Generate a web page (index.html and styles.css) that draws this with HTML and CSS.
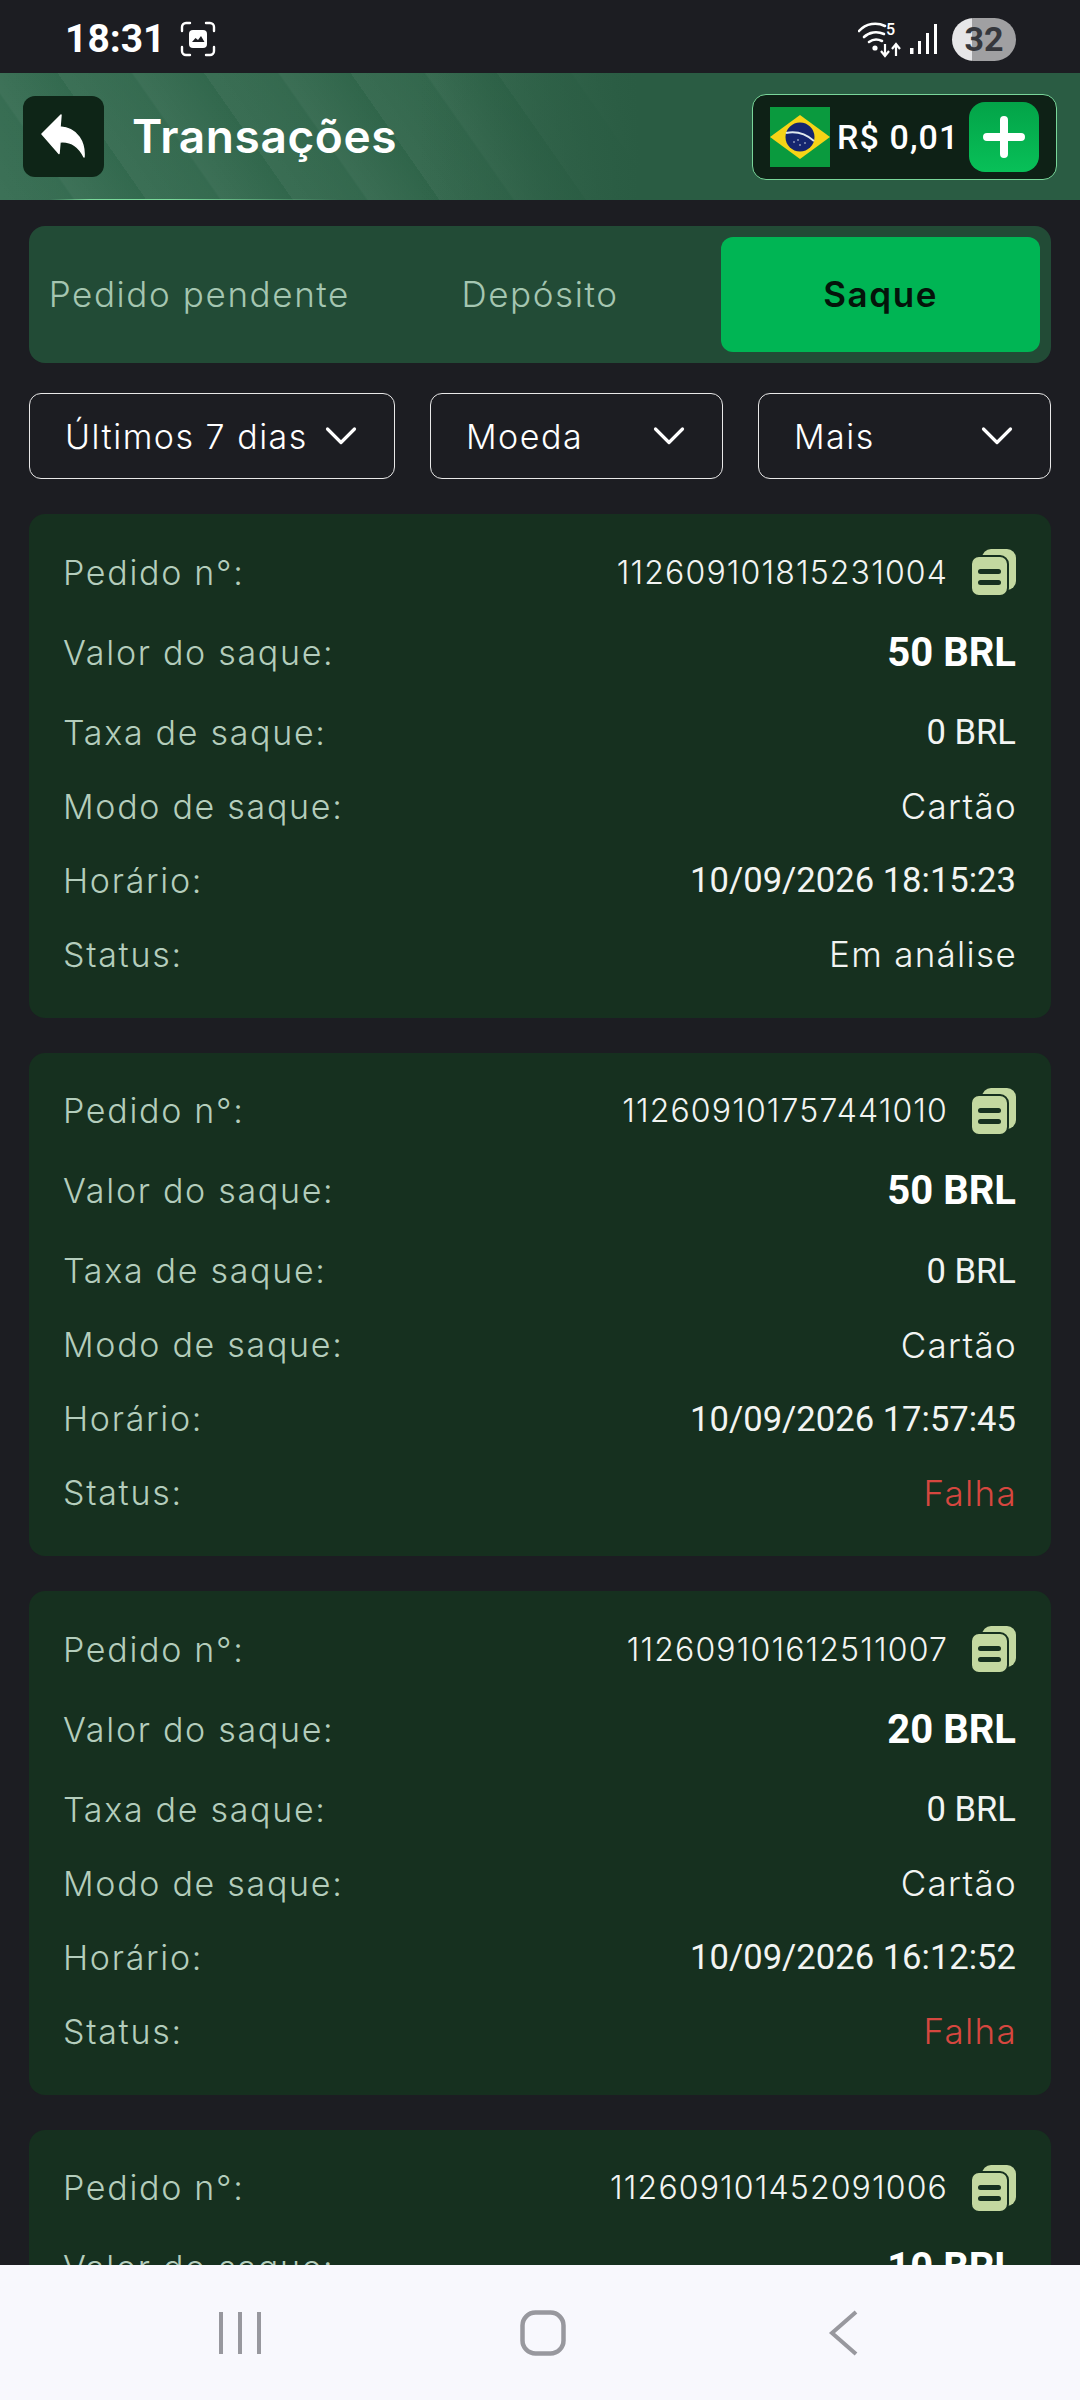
FILE: index.html
```html
<!DOCTYPE html>
<html lang="pt-BR">
<head>
    <meta charset="UTF-8">
    <title>Transações</title>
    <link rel="stylesheet" href="styles.css">
</head>
<body>
<svg class="defs">
    <symbol id="chevron" viewBox="0 0 32 20">
        <path d="M2.5 3 16 16.5 29.500 3" fill="none" stroke="#fff" stroke-width="3.200" stroke-linecap="round" stroke-linejoin="round"/>
    </symbol>
    <symbol id="copy" viewBox="0 0 44 46">
        <rect x="10" y="0" width="34" height="41" rx="9" fill="#c3d8a0"/>
        <rect x="-1" y="7" width="37" height="40" rx="8" fill="#c3d8a0" stroke="#16301f" stroke-width="2"/>
        <rect x="6" y="20" width="23" height="5" rx="2.500" fill="#16301f"/>
        <rect x="6" y="31" width="23" height="5" rx="2.500" fill="#16301f"/>
    </symbol>
</svg>

<div class="page">
    <!--status bar-->
    <div class="status_bar">
        <div class="status_left">
            <span class="clock">18:31</span>
            <svg class="shot_icon" width="36" height="36" viewBox="0 0 36 36">
                <path d="M2 10V6a4 4 0 0 1 4-4h4M26 2h4a4 4 0 0 1 4 4v4M34 26v4a4 4 0 0 1-4 4h-4M10 34H6a4 4 0 0 1-4-4v-4" fill="none" stroke="#fff" stroke-width="2.400" stroke-linecap="round"/>
                <rect x="9" y="9" width="18" height="18" rx="4" fill="#fff"/>
                <path d="M12 21l3.500-4 2.500 2 3-4 3.500 6z" fill="#1c1d22"/>
            </svg>
        </div>
        <div class="status_right">
            <svg width="44" height="40" viewBox="0 0 44 40">
                <g fill="none" stroke="#fff" stroke-width="2.600" stroke-linecap="round">
                    <path d="M1 12C8 4 19 3 27 7"/>
                    <path d="M6 18c5-5 13-6 20-3"/>
                    <path d="M11 23c4-3 9-3 13-1"/>
                </g>
                <circle cx="17" cy="29" r="2.600" fill="#fff"/>
                <path d="M27 25v11M23 32l4 5 4-5M38 37V26M34 30l4-5 4 5" fill="none" stroke="#fff" stroke-width="2.200"/>
                <text x="28" y="16" class="wifi_num">5</text>
            </svg>
            <svg class="signal" width="28" height="32" viewBox="0 0 28 32">
                <rect x="0" y="25" width="3.500" height="6" fill="#fff"/>
                <rect x="8" y="18" width="3" height="13" fill="#fff"/>
                <rect x="16" y="10" width="3" height="21" fill="#fff"/>
                <rect x="24" y="1" width="3" height="30" fill="#fff"/>
            </svg>
            <span class="battery">32</span>
        </div>
    </div>

    <!--header-->
    <div class="top_bar">
        <a class="back_btn" href="#">
            <svg width="46" height="46" viewBox="0 0 46 46">
                <path d="M20 1 1 20l17 19.500 1-11.500c10-1 18 3 24 15 1-14-6-29-24-30z" fill="#fff" stroke="#fff" stroke-width="1.500" stroke-linejoin="round"/>
            </svg>
        </a>
        <h1 class="page_title">Transações</h1>
        <div class="balance">
            <svg class="flag" width="60" height="60" viewBox="0 0 60 60">
                <rect width="60" height="60" fill="#0a9a3e"/>
                <path d="M30 8 60 30 30 52 0 30z" fill="#f7d417"/>
                <circle cx="30" cy="30" r="14.500" fill="#15256f"/>
                <path d="M16 26c10-2 20 1 28 8" fill="none" stroke="#dfe8ee" stroke-width="2"/>
                <g fill="#dfe8ee">
                    <circle cx="24" cy="35" r="0.800"/>
                    <circle cx="30" cy="38" r="0.800"/>
                    <circle cx="35" cy="36" r="0.800"/>
                    <circle cx="28" cy="33" r="0.800"/>
                </g>
            </svg>
            <span class="balance_value">R$ 0,01</span>
            <a class="plus_btn" href="#">
                <svg width="42" height="42" viewBox="0 0 42 42">
                    <path d="M21 4v34M4 21h34" stroke="#fff" stroke-width="8" stroke-linecap="round"/>
                </svg>
            </a>
        </div>
    </div>

    <div class="content">
        <!--tabs-->
        <div class="tabs">
            <div class="tab">Pedido pendente</div>
            <div class="tab">Depósito</div>
            <div class="tab tab_active">Saque</div>
        </div>

        <!--filters-->
        <div class="filters">
            <div class="filter filter_date"><span>Últimos 7 dias</span><svg class="chevron"><use href="#chevron"/></svg></div>
            <div class="filter filter_coin"><span>Moeda</span><svg class="chevron"><use href="#chevron"/></svg></div>
            <div class="filter filter_more"><span>Mais</span><svg class="chevron"><use href="#chevron"/></svg></div>
        </div>

        <!--orders-->
        <div class="order">
            <div class="row row_id"><span class="label">Pedido n°:</span><span class="value order_id">112609101815231004<svg class="copy"><use href="#copy"/></svg></span></div>
            <div class="row row_amount"><span class="label">Valor do saque:</span><span class="num amount">50 BRL</span></div>
            <div class="row"><span class="label">Taxa de saque:</span><span class="num">0 BRL</span></div>
            <div class="row"><span class="label">Modo de saque:</span><span class="value">Cartão</span></div>
            <div class="row"><span class="label">Horário:</span><span class="num">10/09/2026 18:15:23</span></div>
            <div class="row"><span class="label">Status:</span><span class="value">Em análise</span></div>
        </div>

        <div class="order">
            <div class="row row_id"><span class="label">Pedido n°:</span><span class="value order_id">112609101757441010<svg class="copy"><use href="#copy"/></svg></span></div>
            <div class="row row_amount"><span class="label">Valor do saque:</span><span class="num amount">50 BRL</span></div>
            <div class="row"><span class="label">Taxa de saque:</span><span class="num">0 BRL</span></div>
            <div class="row"><span class="label">Modo de saque:</span><span class="value">Cartão</span></div>
            <div class="row"><span class="label">Horário:</span><span class="num">10/09/2026 17:57:45</span></div>
            <div class="row"><span class="label">Status:</span><span class="value failed">Falha</span></div>
        </div>

        <div class="order">
            <div class="row row_id"><span class="label">Pedido n°:</span><span class="value order_id">112609101612511007<svg class="copy"><use href="#copy"/></svg></span></div>
            <div class="row row_amount"><span class="label">Valor do saque:</span><span class="num amount">20 BRL</span></div>
            <div class="row"><span class="label">Taxa de saque:</span><span class="num">0 BRL</span></div>
            <div class="row"><span class="label">Modo de saque:</span><span class="value">Cartão</span></div>
            <div class="row"><span class="label">Horário:</span><span class="num">10/09/2026 16:12:52</span></div>
            <div class="row"><span class="label">Status:</span><span class="value failed">Falha</span></div>
        </div>

        <div class="order">
            <div class="row row_id"><span class="label">Pedido n°:</span><span class="value order_id">112609101452091006<svg class="copy"><use href="#copy"/></svg></span></div>
            <div class="row row_amount"><span class="label">Valor do saque:</span><span class="num amount">10 BRL</span></div>
        </div>
    </div>

    <!--system nav-->
    <div class="nav_bar">
        <svg width="44" height="44" viewBox="0 0 44 44">
            <path d="M3 1v42M22 1v42M41 1v42" stroke="#98989e" stroke-width="4"/>
        </svg>
        <svg class="nav_home" width="46" height="46" viewBox="0 0 46 46">
            <rect x="2.500" y="2.500" width="41" height="41" rx="13" fill="none" stroke="#98989e" stroke-width="4.500"/>
        </svg>
        <svg class="nav_back" width="32" height="46" viewBox="0 0 32 46">
            <path d="M28 2 4 23l24 21" fill="none" stroke="#98989e" stroke-width="4"/>
        </svg>
    </div>
</div>
</body>
</html>
```

FILE: styles.css
```css
*{
    margin: 0px;
    padding: 0px;
    box-sizing: border-box;
}
body{
    background-color: #1c1d22;
    font-family: "Inter", "Liberation Sans", sans-serif;
    color: #fff;
}
.defs{
    display: none;
}

.page{
    width: 1080px;
    height: 2400px;
    display: flex;
    flex-direction: column;
    overflow: hidden;
}

/*status bar*/
.status_bar{
    height: 73px;
    flex: none;
    display: flex;
    justify-content: space-between;
    align-items: center;
    padding: 5px 64px 0 65px;
}
.status_left, .status_right{
    display: flex;
    align-items: center;
}
.clock{
    font-family: "Roboto", sans-serif;
    font-size: 39px;
    font-weight: 700;
    margin-right: 14px;
}
.status_right{
    gap: 8px;
}
.wifi_num{
    font-family: "Roboto", sans-serif;
    font-size: 16px;
    font-weight: 500;
    fill: #fff;
}
.signal{
    margin-right: 6px;
}
.battery{
    width: 64px;
    height: 43px;
    border-radius: 22px;
    background: linear-gradient(90deg, #e6e6e8 0, #e6e6e8 32%, #a0a0a2 32%, #a0a0a2 100%);
    color: #35373c;
    font-family: "Roboto", sans-serif;
    font-size: 34px;
    font-weight: 700;
    text-align: center;
    line-height: 43px;
}

/*header*/
.top_bar{
    height: 127px;
    flex: none;
    display: flex;
    align-items: center;
    padding: 0 23px;
    background:
        linear-gradient(90deg, transparent 50px, #7ad99a 90px, #7ad99a 170px, transparent 340px) bottom / 100% 1px no-repeat,
        linear-gradient(90deg, transparent 0, transparent 420px, #2a5c43 640px),
        repeating-linear-gradient(55deg, rgba(255,255,255,0.045) 0, rgba(255,255,255,0.015) 60px, rgba(255,255,255,0.05) 62px, rgba(255,255,255,0) 120px),
        linear-gradient(90deg, #346b50 0, #2f6449 45%, #2a5c43 70%);
}
.back_btn{
    width: 81px;
    height: 81px;
    flex: none;
    display: flex;
    justify-content: center;
    align-items: center;
    background-color: #0e2517;
    border-radius: 12px;
}
.page_title{
    flex: 1;
    margin-left: 28px;
    padding-bottom: 2px;
    font-size: 46px;
    font-weight: 600;
    letter-spacing: 0.6px;
}
.balance{
    width: 305px;
    height: 86px;
    flex: none;
    display: flex;
    align-items: center;
    padding-left: 17px;
    background-color: #0e2116;
    border: 1px solid #79d69a;
    border-radius: 14px;
}
.flag{
    flex: none;
}
.balance_value{
    font-family: "Roboto", sans-serif;
    font-size: 34px;
    font-weight: 500;
    letter-spacing: 1.100px;
    margin-left: 7px;
    white-space: nowrap;
}
.plus_btn{
    width: 70px;
    height: 70px;
    flex: none;
    margin-left: auto;
    margin-right: 17px;
    display: flex;
    justify-content: center;
    align-items: center;
    background: linear-gradient(#03a348, #08c058);
    border-radius: 16px;
}

/*page body*/
.content{
    flex: 1;
    min-height: 0;
    overflow: hidden;
    padding: 26px 29px 0;
}

.tabs{
    height: 137px;
    display: grid;
    grid-template-columns: repeat(3, 1fr);
    padding: 11px 0;
    background-color: #224b36;
    border-radius: 16px;
}
.tab{
    display: flex;
    justify-content: center;
    align-items: center;
    margin: 0 11px;
    padding-bottom: 2px;
    font-size: 35px;
    font-weight: 300;
    letter-spacing: 1.600px;
    color: #a5c6b1;
    white-space: nowrap;
}
.tab_active{
    background-color: #00b554;
    border-radius: 12px;
    color: #04140a;
    font-weight: 600;
}

.filters{
    display: flex;
    justify-content: space-between;
    margin-top: 30px;
}
.filter{
    height: 86px;
    display: flex;
    justify-content: space-between;
    align-items: center;
    padding: 0 37px 0 35px;
    border: 1.500px solid #e8e8e8;
    border-radius: 12px;
    font-size: 34px;
    font-weight: 300;
    letter-spacing: 1.500px;
}
.filter_date{
    width: 366px;
}
.filter_coin{
    width: 293px;
}
.filter_more{
    width: 293px;
}
.chevron{
    width: 32px;
    height: 20px;
    flex: none;
}

.order{
    margin-top: 35px;
    padding: 21px 35px 26.500px 34px;
    background-color: #16301f;
    border-radius: 16px;
}
.row{
    height: 74px;
    display: flex;
    justify-content: space-between;
    align-items: center;
    white-space: nowrap;
}
.row_id, .row_amount{
    margin-bottom: 6px;
}
.label{
    font-size: 34px;
    font-weight: 300;
    letter-spacing: 1.700px;
    color: #b4cdbc;
}
.value{
    display: flex;
    align-items: center;
    margin-right: -1px;
    font-size: 35px;
    font-weight: 300;
    letter-spacing: 1.300px;
    color: #f2f4f2;
}
.order_id{
    margin-right: 0;
    font-size: 32px;
    letter-spacing: 1.150px;
}
.num{
    font-family: "Roboto", sans-serif;
    font-size: 34.600px;
    color: #f2f4f2;
}
.amount{
    font-size: 40px;
    font-weight: 700;
    color: #fff;
}
.failed{
    color: #d6473f;
}
.copy{
    width: 44px;
    height: 46px;
    flex: none;
    margin-left: 24px;
}

/*system nav*/
.nav_bar{
    height: 135px;
    flex: none;
    display: flex;
    align-items: center;
    padding-left: 218px;
    background-color: #f8f8fd;
}
.nav_home{
    margin-left: 258px;
}
.nav_back{
    margin-left: 262px;
}
```
